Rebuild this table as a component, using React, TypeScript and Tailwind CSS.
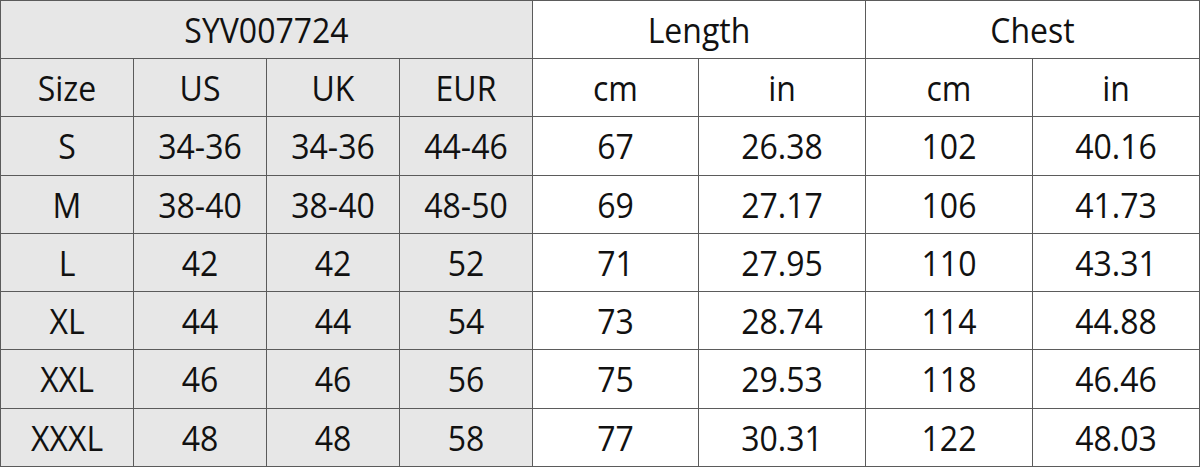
const rows: string[][] = [
  ["S", "34-36", "34-36", "44-46", "67", "26.38", "102", "40.16"],
  ["M", "38-40", "38-40", "48-50", "69", "27.17", "106", "41.73"],
  ["L", "42", "42", "52", "71", "27.95", "110", "43.31"],
  ["XL", "44", "44", "54", "73", "28.74", "114", "44.88"],
  ["XXL", "46", "46", "56", "75", "29.53", "118", "46.46"],
  ["XXXL", "48", "48", "58", "77", "30.31", "122", "48.03"],
];

function Cell({ children, gray, span }: { children: React.ReactNode; gray?: boolean; span?: number }) {
  return (
    <div
      className={`flex items-center justify-center ${gray ? "bg-[#e7e7e7]" : "bg-white"} ${
        span === 4 ? "col-span-4" : span === 2 ? "col-span-2" : ""
      }`}
    >
      <span className="scale-y-[1.1]">{children}</span>
    </div>
  );
}

export default function App() {
  return (
    <div
      className="w-[1200px] h-[467px] bg-white text-[32px] text-[#111] leading-none"
      style={{ fontFamily: '"Open Sans", "Noto Sans", sans-serif' }}
    >
      <div className="grid grid-cols-[132px_132px_132px_132px_165px_166px_166px_166px] grid-rows-[57px_57px_58px_57px_57px_57px_58px_57px] gap-px p-px bg-[#5b5b5b] w-[1200px] h-[467px]">
        <Cell gray span={4}>SYV007724</Cell>
        <Cell span={2}>Length</Cell>
        <Cell span={2}>Chest</Cell>

        {["Size", "US", "UK", "EUR"].map((t) => (
          <Cell key={t} gray>
            {t}
          </Cell>
        ))}
        {["cm", "in", "cm", "in"].map((t, i) => (
          <Cell key={i}>{t}</Cell>
        ))}

        {rows.map((r) =>
          r.map((v, i) => (
            <Cell key={r[0] + i} gray={i < 4}>
              {v}
            </Cell>
          ))
        )}
      </div>
    </div>
  );
}
